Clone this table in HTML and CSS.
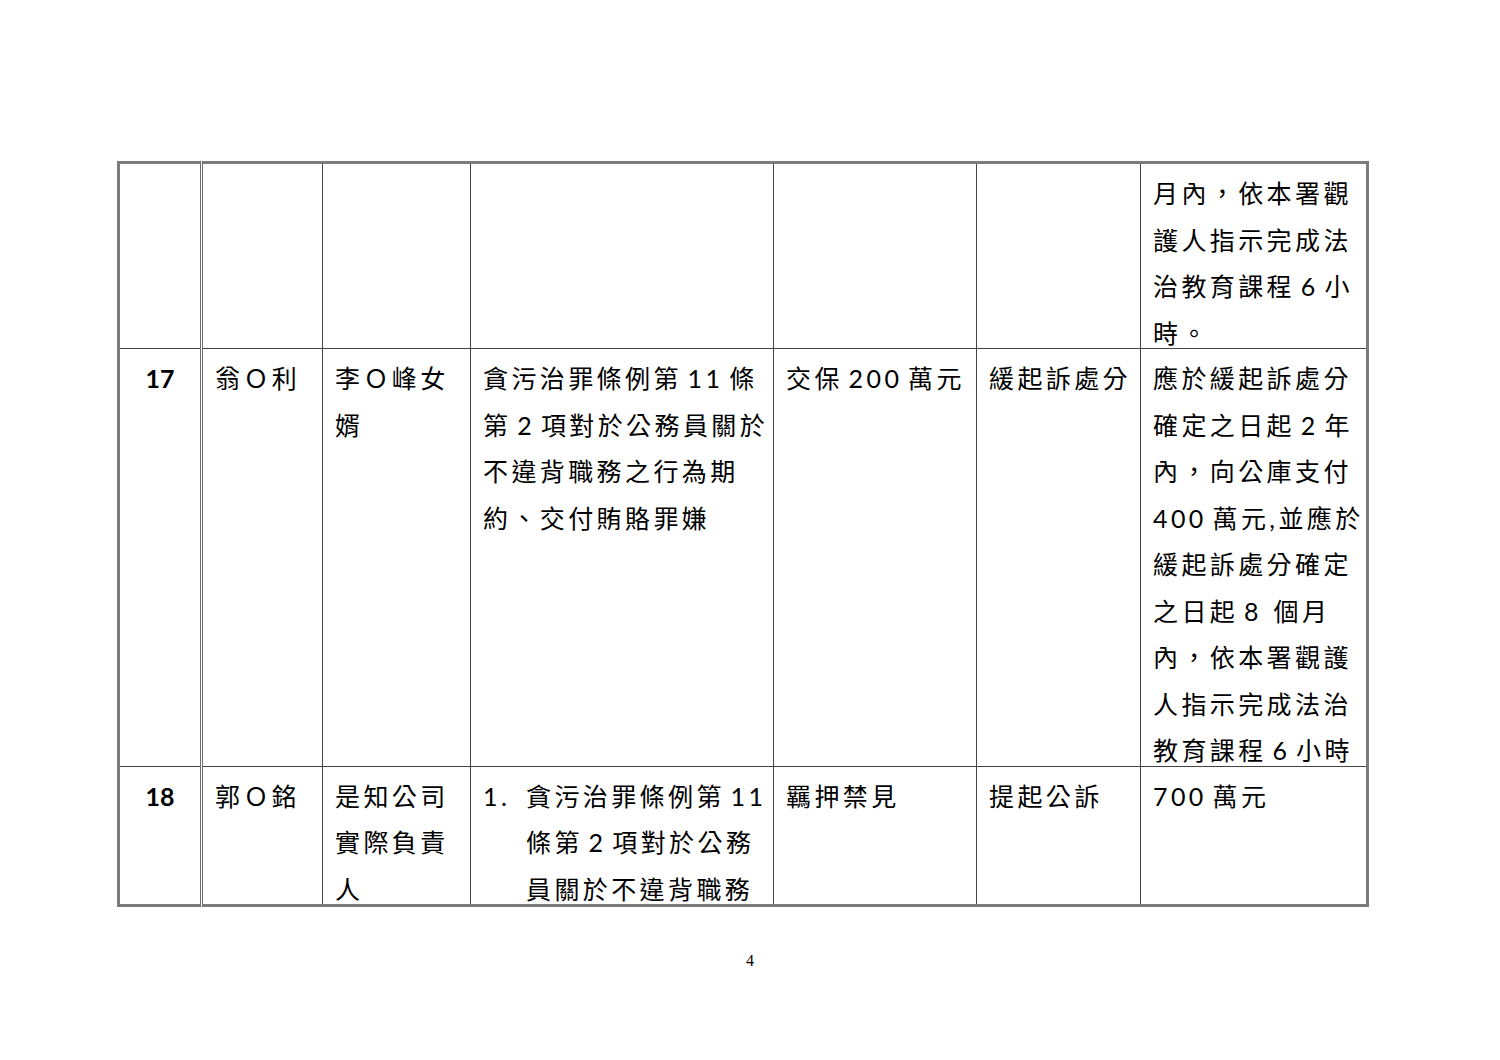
FILE: index.html
```html
<!DOCTYPE html>
<html lang="zh-Hant">
<head>
<meta charset="utf-8">
<title>4</title>
<link rel="stylesheet" href="styles.css">
</head>
<body>
<div class="page">
  <table class="grid">
    <colgroup>
      <col class="w1"><col class="w2"><col class="w3"><col class="w4"><col class="w5"><col class="w6"><col class="w7">
    </colgroup>
    <tr>
      <td class="no"><div class="c"></div></td>
      <td><div class="c"></div></td>
      <td><div class="c"></div></td>
      <td><div class="c"></div></td>
      <td><div class="c"></div></td>
      <td><div class="c"></div></td>
      <td><div class="c">月內，依本署觀<br>護人指示完成法<br>治教育課程 6 小<br>時。</div></td>
    </tr>
    <tr>
      <td class="no"><div class="c">17</div></td>
      <td><div class="c">翁Ｏ利</div></td>
      <td><div class="c">李Ｏ峰女<br>婿</div></td>
      <td><div class="c">貪污治罪條例第 11 條<br>第 2 項對於公務員關於<br>不違背職務之行為期<br>約、交付賄賂罪嫌</div></td>
      <td><div class="c">交保 200 萬元</div></td>
      <td><div class="c">緩起訴處分</div></td>
      <td><div class="c">應於緩起訴處分<br>確定之日起 2 年<br>內，向公庫支付<br>400 萬元,並應於<br>緩起訴處分確定<br>之日起 8&nbsp; 個月<br>內，依本署觀護<br>人指示完成法治<br>教育課程 6 小時</div></td>
    </tr>
    <tr>
      <td class="no"><div class="c">18</div></td>
      <td><div class="c">郭Ｏ銘</div></td>
      <td><div class="c">是知公司<br>實際負責<br>人</div></td>
      <td><div class="c"><div class="item"><span class="num">1.</span><span class="itext">貪污治罪條例第 11<br>條第 2 項對於公務<br>員關於不違背職務</span></div></div></td>
      <td><div class="c">羈押禁見</div></td>
      <td><div class="c">提起公訴</div></td>
      <td><div class="c">700 萬元</div></td>
    </tr>
  </table>
  <div class="pageno">4</div>
</div>
</body>
</html>
```

FILE: styles.css
```css
html, body {
  margin: 0;
  padding: 0;
  background: #ffffff;
}

.page {
  width: 1500px;
  height: 1060px;
  padding: 161px 0 0 117px;
  box-sizing: border-box;
}

.grid {
  border-collapse: collapse;
  table-layout: fixed;
  width: 1249px;
  border: 3px solid #7c7c7c;
  font-family: "Lato", "Noto Sans CJK TC", sans-serif;
  font-size: 25px;
  letter-spacing: 3.4px;
  word-spacing: -4px;
  color: #000000;
}

.w1 { width: 83px; }
.w2 { width: 121px; }
.w3 { width: 148px; }
.w4 { width: 303px; }
.w5 { width: 203px; }
.w6 { width: 164px; }
.w7 { width: 227px; }

.grid td {
  border: 1px solid #444444;
  vertical-align: top;
  padding: 6px 2px 0 12px;
  line-height: 46.5px;
  white-space: nowrap;
  overflow: hidden;
}

.grid td.no {
  border-right: 3px double #6e6e6e;
  text-align: center;
  font-weight: 700;
  letter-spacing: 0;
  padding-left: 2px;
}

.grid tr:first-child td { border-top: 3px solid #7c7c7c; }
.grid tr:last-child td { border-bottom: 3px solid #7c7c7c; }
.grid td:first-child { border-left: 3px solid #7c7c7c; }
.grid td:last-child { border-right: 3px solid #7c7c7c; }

.c {
  margin-bottom: -8px;
}

.item {
  display: flex;
}

.num {
  width: 43px;
  flex: none;
}

.itext {
  display: block;
}

.pageno {
  width: 1266px;
  margin-left: -117px;
  padding-left: 117px;
  margin-top: 45px;
  text-align: center;
  font-family: "Liberation Serif", serif;
  font-size: 16px;
  color: #000000;
}
```
